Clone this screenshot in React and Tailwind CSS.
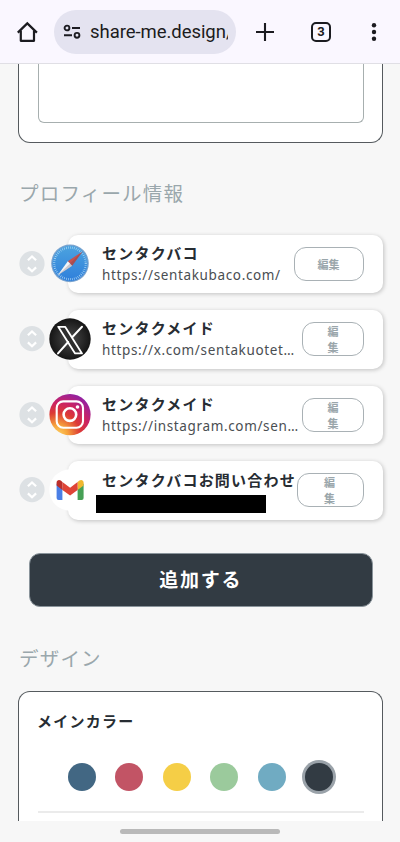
import { clsx } from 'clsx';

const LINKS = [
  { id: 1, title: 'センタクバコ', url: 'https://sentakubaco.com/', icon: SafariIcon, btn: 'w-[70px] pr-px' },
  { id: 2, title: 'センタクメイド', url: 'https://x.com/sentakuotet…', icon: XIcon, btn: 'w-[62px] px-5' },
  { id: 3, title: 'センタクメイド', url: 'https://instagram.com/sen…', icon: InstagramIcon, btn: 'w-[62px] px-5' },
  { id: 4, title: 'センタクバコお問い合わせ', url: null, icon: GmailIcon, btn: 'w-[67px] pl-[22px] pr-6' },
];

const COLORS = [
  { name: 'navy', cls: 'bg-[#426783]' },
  { name: 'red', cls: 'bg-[#c25465]' },
  { name: 'yellow', cls: 'bg-[#f5ce46]' },
  { name: 'green', cls: 'bg-[#9bca9c]' },
  { name: 'blue', cls: 'bg-[#70abc2]' },
  { name: 'dark', cls: 'bg-[#323b43] ring-[3px] ring-[#9aa2a9]' },
];

function SafariIcon() {
  return (
    <svg viewBox="0 0 42 42" className="h-[42px] w-[42px]">
      <defs>
        <linearGradient id="safari" x1="0" y1="0" x2="0" y2="1">
          <stop offset="0" stopColor="#4ca3df" />
          <stop offset="1" stopColor="#2f7fdb" />
        </linearGradient>
      </defs>
      <circle cx="21" cy="20.4" r="18.8" fill="#79a3cf" />
      <circle cx="21" cy="20.4" r="17.6" fill="url(#safari)" />
      <circle cx="21" cy="20.4" r="15.8" fill="none" stroke="#b5dcf5" strokeWidth="2.2" strokeDasharray="0.6 1.4" />
      <path d="M33.5 8.5 18.8 18.2l4.4 4.6z" fill="#c6524f" />
      <path d="M8.5 32.5 18.8 18.2l4.4 4.6z" fill="#f4f5f7" />
      <path d="M8.5 32.5 33.5 8.5 23.2 22.8z" fill="#59404e" opacity="0.25" />
    </svg>
  );
}

function XIcon() {
  return (
    <svg viewBox="0 0 42 42" className="h-[42px] w-[42px]">
      <defs>
        <radialGradient id="xbg">
          <stop offset="0" stopColor="#4b4b4b" />
          <stop offset="1" stopColor="#151515" />
        </radialGradient>
      </defs>
      <circle cx="21" cy="21" r="20.7" fill="url(#xbg)" />
      <path d="M9.2 8.8h6.9L33 35.4h-6.9z" fill="#2d2d2d" stroke="#fff" strokeWidth="1.8" strokeLinejoin="round" />
      <path d="M33 8.8 23.2 19.2M19.2 24 9 35.4" fill="none" stroke="#fff" strokeWidth="2" strokeLinecap="round" />
    </svg>
  );
}

function InstagramIcon() {
  return (
    <svg viewBox="0 0 42 42" className="h-[42px] w-[42px]">
      <defs>
        <radialGradient id="insta" cx="0.2" cy="1" r="1.1">
          <stop offset="0" stopColor="#fdd264" />
          <stop offset="0.22" stopColor="#f7a43c" />
          <stop offset="0.5" stopColor="#dc3a35" />
          <stop offset="0.72" stopColor="#cb2263" />
          <stop offset="1" stopColor="#8d22a8" />
        </radialGradient>
      </defs>
      <circle cx="21" cy="20.6" r="20.6" fill="url(#insta)" />
      <g fill="none" stroke="#fff" strokeWidth="2.1">
        <rect x="7.7" y="7.4" width="26.3" height="26.3" rx="6.5" />
        <circle cx="20.9" cy="20.6" r="6.3" strokeWidth="2.6" />
      </g>
      <circle cx="28.5" cy="13" r="1.8" fill="#fff" />
    </svg>
  );
}

function GmailIcon() {
  return (
    <svg viewBox="0 0 42 42" className="h-[42px] w-[42px]">
      <circle cx="21" cy="21" r="20.7" fill="#fff" />
      <path d="M7.6 14.5 13.4 18.8V31H9.6a2 2 0 0 1-2-2z" fill="#4a7fe6" />
      <path d="M34.6 14.5 28.6 18.8V31h4a2 2 0 0 0 2-2z" fill="#46a055" />
      <path d="M28.6 13 30.4 11.6c1.9-1.4 4.2-.2 4.2 2v2.8l-6 4.5z" fill="#f0b72f" />
      <path d="M13.4 13l7.7 5.8L28.6 13v7.9l-7.5 5.6-7.7-5.6z" fill="#df4437" />
      <path d="M7.6 13.6c0-2.2 2.3-3.4 4.2-2L13.4 13v7.9l-5.8-4.5z" fill="#bb2f2b" />
    </svg>
  );
}

function BrowserBar() {
  return (
    <header className="flex h-16 shrink-0 items-center border-b border-[#e0dfe5] bg-[#faf7ff] text-[#1b1b20]">
      <svg viewBox="0 0 24 24" className="ml-[15px] h-6 w-6" fill="none" stroke="currentColor" strokeWidth="2.2" strokeLinejoin="round">
        <path d="M2.8 12.6 12.3 3.4l9.6 9.2" strokeLinejoin="miter" />
        <path d="M5.8 10.5v10.3h13.2V10.5" />
      </svg>
      <div className="ml-[15px] flex h-11 w-[182px] items-center rounded-full bg-[#e4e3f0] pl-[9px]">
        <svg viewBox="0 0 18 16" className="h-4 w-[18px] shrink-0" fill="none" stroke="currentColor" strokeWidth="1.9">
          <circle cx="4" cy="4" r="2.4" />
          <path d="M9 4h8M1 11.3h8" />
          <circle cx="14" cy="11.3" r="2.4" />
        </svg>
        <span className="ml-[9px] w-[138px] overflow-hidden whitespace-nowrap font-['Roboto',sans-serif] text-[18.5px] leading-6 tracking-[-0.05px]">share-me.design/</span>
      </div>
      <svg viewBox="0 0 18 18" className="ml-5 h-[18px] w-[18px]" stroke="currentColor" strokeWidth="2.1">
        <path d="M9 0v18M0 9h18" />
      </svg>
      <div className="ml-[37px] flex h-5 w-5 items-center justify-center rounded-[5px] border-2 border-current font-['Roboto',sans-serif] text-[13px] font-bold leading-none">3</div>
      <svg viewBox="0 0 6 20" className="ml-[40px] h-5 w-1.5" fill="currentColor">
        <circle cx="3" cy="3.2" r="2.2" />
        <circle cx="3" cy="10" r="2.2" />
        <circle cx="3" cy="16.7" r="2.2" />
      </svg>
    </header>
  );
}

function DragHandle() {
  return (
    <svg viewBox="0 0 26 26" className="h-[26px] w-[26px] shrink-0">
      <circle cx="13" cy="12.7" r="12.6" fill="#dde1e4" />
      <path d="M8.9 9.2 13 5.4l4.1 3.8M8.9 16.4 13 20.2l4.1-3.8" fill="none" stroke="#fff" strokeWidth="2.2" />
    </svg>
  );
}

function LinkRow({ link }) {
  const Icon = link.icon;
  return (
    <li className="flex h-[58.5px] items-center">
      <DragHandle />
      <div className="z-10 -mr-[23px] ml-1 shrink-0"><Icon /></div>
      <div className="flex h-full w-[315px] items-center rounded-[10px] bg-white pl-[28px] pr-[19px] shadow-[1px_1px_4px_rgba(0,0,0,0.22)]">
        <div className="min-w-0 flex-1 pl-[6px]">
          <p className="h-[22px] whitespace-nowrap text-[15px] font-bold leading-[22px] tracking-[1.23px] text-[#272d33]">{link.title}</p>
          {link.url ? (
            <p className="h-[22px] whitespace-nowrap font-['Noto_Sans',sans-serif] text-[13.5px] leading-[22px] tracking-[0.64px] text-[#4a4e52]">{link.url}</p>
          ) : (
            <div className="mb-[-1px] ml-[-6px] mt-1 h-[18px] w-[170px] bg-black" />
          )}
        </div>
        <button className={clsx('h-[34px] shrink-0 rounded-[12px] border border-[#a9b1b5] text-[11px] font-bold leading-4 text-[#9aa6ab]', link.btn)}>編集</button>
      </div>
    </li>
  );
}

export default function App() {
  return (
    <div className="flex h-[842px] w-[400px] flex-col overflow-hidden bg-[#f7f7f7] font-['Noto_Sans_CJK_JP',sans-serif]">
      <BrowserBar />

      <main className="flex h-[757px] shrink-0 flex-col overflow-hidden pl-[18px] pr-4">
        <div className="h-[79px] w-[365px] shrink-0 rounded-b-[12px] border border-t-0 border-[#555a5e] bg-white pb-[19px] pl-[19px] pr-[18px]">
          <div className="h-full rounded-b-[6px] border border-t-0 border-[#a7afaf]" />
        </div>

        <h2 className="ml-px mt-[35px] h-[30px] text-[19.5px] font-normal leading-[30px] tracking-[1.2px] text-[#9aa7ac]">プロフィール情報</h2>

        <ul className="ml-px mt-[26.5px] flex flex-col gap-[17px]">
          {LINKS.map((l) => <LinkRow key={l.id} link={l} />)}
        </ul>

        <button className="ml-[10.5px] mt-[33px] h-[54px] w-[344.5px] shrink-0 rounded-[11px] border border-[#8a949b] bg-[#323b43] text-[19px] font-bold tracking-[1.7px] text-white">追加する</button>

        <h2 className="ml-px mt-[36.5px] h-[30px] text-[19.5px] font-normal leading-[30px] tracking-[1.2px] text-[#9aa7ac]">デザイン</h2>

        <section className="mt-[18px] h-[160px] w-[365px] shrink-0 rounded-t-[12px] border border-b-0 border-[#555a5e] bg-white pl-[19px] pr-[18px] pt-[18px]">
          <h3 className="-ml-px text-[15px] font-bold leading-[22px] tracking-[1.25px] text-[#272d33]">メインカラー</h3>
          <div className="mt-[31px] flex justify-between pl-[30px] pr-[31px]">
            {COLORS.map((c) => <button key={c.name} className={clsx('h-7 w-7 rounded-full', c.cls)} />)}
          </div>
          <div className="mt-[20px] h-[2px] bg-[#ebebeb]" />
        </section>
      </main>

      {/* gesture bar */}
      <footer className="flex flex-1 items-center justify-center">
        <div className="h-[5px] w-[160px] rounded-full bg-[#b9b9b9]" />
      </footer>
    </div>
  );
}
